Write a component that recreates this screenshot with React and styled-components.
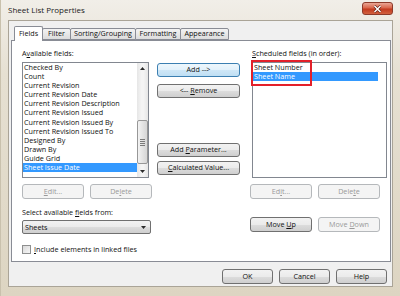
import React from 'react';
import styled, { createGlobalStyle } from 'styled-components';

const GlobalStyle = createGlobalStyle`
  html, body {
    margin: 0;
    padding: 0;
    background: #fff;
  }
  body {
    font-family: "Open Sans", "Liberation Sans", sans-serif;
    font-size: 7.2px;
    color: #111;
  }
`;

const Window = styled.div`
  width: 400px;
  height: 296px;
  box-sizing: border-box;
  padding: 0 7px 9px 7px;
  display: flex;
  flex-direction: column;
  background: linear-gradient(#f1eee8, #e6e0d2 25%, #ddd5c2);
  border-left: 1px solid #c9c1ad;
`;

const TitleBar = styled.div`
  height: 20px;
  display: flex;
  justify-content: space-between;
  align-items: flex-start;
`;

const Title = styled.div`
  font-size: 8px;
  line-height: 20px;
  color: #1a1a1a;
`;

const CloseBtn = styled.div`
  margin-top: 2px;
  width: 31px;
  height: 13px;
  box-sizing: border-box;
  border: 1px solid #8d3a2a;
  border-radius: 3px;
  background: linear-gradient(#eaa695, #d9654a 45%, #c23a1f 55%, #d2613f);
  display: flex;
  align-items: center;
  justify-content: center;
`;

const Client = styled.div`
  flex: 1;
  background: #f0f0f0;
  border: 1px solid #aaa497;
  padding: 5px 1px 0 2px;
  display: flex;
  flex-direction: column;
`;

const TabRow = styled.div`
  height: 14px;
  padding-left: 4px;
  display: flex;
  align-items: flex-end;
`;

const Tab = styled.div`
  width: ${p => p.w}px;
  height: ${p => (p.active ? 15 : 12)}px;
  box-sizing: border-box;
  margin-left: -1px;
  margin-bottom: ${p => (p.active ? -1 : 0)}px;
  border: 1px solid #898c95;
  border-bottom: ${p => (p.active ? 'none' : '1px solid #898c95')};
  border-radius: 2px 2px 0 0;
  background: ${p => (p.active ? '#fff' : 'linear-gradient(#f3f3f3, #e8e8e8 50%, #dcdcdc)')};
  position: relative;
  z-index: ${p => (p.active ? 2 : 1)};
  display: flex;
  align-items: center;
  justify-content: center;
  line-height: 1;
`;

const Panel = styled.div`
  height: 222px;
  box-sizing: border-box;
  background: #fff;
  border: 1px solid #898c95;
  padding: 8px 5px 0 10px;
  display: flex;
  align-items: flex-start;
`;

const Column = styled.div`
  width: ${p => p.w}px;
  height: ${p => (p.h ? `${p.h}px` : 'auto')};
  margin-left: ${p => p.gap || 0}px;
  margin-top: ${p => p.mt || 0}px;
  display: flex;
  flex-direction: column;
  position: relative;
`;

const Label = styled.div`
  line-height: 9px;
  height: 9px;
  margin-top: ${p => p.mt || 0}px;
  white-space: nowrap;
`;

const ListBox = styled.div`
  margin-top: 4px;
  width: ${p => p.w}px;
  height: 116px;
  box-sizing: border-box;
  border: 1px solid #828790;
  background: #fff;
  display: flex;
`;

const Items = styled.div`
  flex: 1;
  overflow: hidden;
`;

const Item = styled.div`
  height: 9.1px;
  line-height: 9.1px;
  padding-left: 1px;
  margin-right: ${p => p.mr || 0}px;
  white-space: nowrap;
  background: ${p => (p.selected ? '#3399ff' : 'transparent')};
  color: ${p => (p.selected ? '#fff' : '#111')};
`;

const ScrollBar = styled.div`
  width: 11px;
  display: flex;
  flex-direction: column;
  background: linear-gradient(90deg, #e6e6e6, #f4f4f4 40%, #f4f4f4 60%, #e6e6e6);
`;

const ScrollArrow = styled.div`
  height: 11px;
  display: flex;
  align-items: center;
  justify-content: center;
`;

const Track = styled.div`
  flex: 1;
  padding-top: 46px;
`;

const Thumb = styled.div`
  height: 44px;
  box-sizing: border-box;
  border: 1px solid #979797;
  border-radius: 2px;
  background: linear-gradient(90deg, #f3f3f3, #e4e4e4 50%, #d6d6d6);
  display: flex;
  flex-direction: column;
  align-items: center;
  justify-content: center;
  gap: 1px;
`;

const Grip = styled.div`
  width: 5px;
  height: 1px;
  background: #7a7a7a;
`;

const BtnRow = styled.div`
  display: flex;
  gap: ${p => p.gap || 6}px;
  margin-top: ${p => p.mt || 0}px;
  margin-left: ${p => p.ml || 0}px;
`;

const ButtonBox = styled.div`
  width: ${p => p.w}px;
  height: ${p => p.h || 15}px;
  margin-top: ${p => p.mt || 0}px;
  box-sizing: border-box;
  border: 1px solid ${p => (p.disabled ? '#b5b8bb' : p.primary ? '#3c7fb1' : '#707070')};
  border-radius: 3px;
  background: ${p =>
    p.disabled
      ? '#f4f4f4'
      : p.primary
      ? 'linear-gradient(#eef7fc, #e2f1fb 50%, #cfe7f7 50%, #bfdff4)'
      : 'linear-gradient(#f2f2f2, #ebebeb 50%, #dddddd 50%, #cfcfcf)'};
  color: ${p => (p.disabled ? '#9a9a9a' : '#111')};
  display: flex;
  align-items: center;
  justify-content: center;
  white-space: pre;
  line-height: 1;
`;

const Button = ({ children, ...rest }) => (
  <ButtonBox {...rest}>
    <span>{children}</span>
  </ButtonBox>
);

const Spacer = styled.div`
  flex: 1;
`;

const Select = styled.div`
  margin-top: 3px;
  width: 129px;
  height: 14px;
  box-sizing: border-box;
  border: 1px solid #707070;
  border-radius: 2px;
  background: linear-gradient(#f2f2f2, #ebebeb 50%, #dddddd 50%, #cfcfcf);
  display: flex;
  align-items: center;
  justify-content: space-between;
  padding: 0 4px 0 2px;
`;

const CheckRow = styled.div`
  margin-top: 10px;
  display: flex;
  align-items: center;
  gap: 3px;
  white-space: nowrap;
`;

const CheckBox = styled.div`
  width: 9px;
  height: 9px;
  box-sizing: border-box;
  border: 1px solid #8e8f8f;
  background: linear-gradient(135deg, #d9d9d9, #f6f6f6);
`;

const Highlight = styled.div`
  position: absolute;
  left: -1px;
  top: 11px;
  width: 61px;
  height: 26px;
  box-sizing: border-box;
  border: 2px solid #e3202a;
`;

const Footer = styled.div`
  display: flex;
  justify-content: flex-end;
  gap: 6px;
  padding: 7px 4px 0 0;
`;

const U = styled.span`
  text-decoration: underline;
`;

const Arrow = ({ up }) => (
  <svg width="5" height="3" viewBox="0 0 5 3">
    <polygon points={up ? '0,3 5,3 2.5,0' : '0,0 5,0 2.5,3'} fill="#2b2b2b" />
  </svg>
);

const available = [
  'Checked By',
  'Count',
  'Current Revision',
  'Current Revision Date',
  'Current Revision Description',
  'Current Revision Issued',
  'Current Revision Issued By',
  'Current Revision Issued To',
  'Designed By',
  'Drawn By',
  'Guide Grid',
  'Sheet Issue Date',
];

const tabs = [
  { name: 'Fields', w: 29, active: true },
  { name: 'Filter', w: 29 },
  { name: 'Sorting/Grouping', w: 66 },
  { name: 'Formatting', w: 46 },
  { name: 'Appearance', w: 49 },
];

export default function App() {
  return (
    <>
      <GlobalStyle />
      <Window>
        <TitleBar>
          <Title>Sheet List Properties</Title>
          <CloseBtn>
            <svg width="9" height="8" viewBox="0 0 9 8">
              <path d="M1.5 1 L7.5 7 M7.5 1 L1.5 7" stroke="#5a1a10" strokeWidth="2.6" />
              <path d="M1.5 1 L7.5 7 M7.5 1 L1.5 7" stroke="#fff" strokeWidth="1.5" />
            </svg>
          </CloseBtn>
        </TitleBar>
        <Client>
          <TabRow>
            {tabs.map(t => (
              <Tab key={t.name} w={t.w} active={t.active}>
                {t.name}
              </Tab>
            ))}
          </TabRow>
          <Panel>
            <Column w={130}>
              <Label>A<U>v</U>ailable fields:</Label>
              <ListBox w={127}>
                <Items>
                  {available.map((f, i) => (
                    <Item key={f} selected={i === available.length - 1}>{f}</Item>
                  ))}
                </Items>
                <ScrollBar>
                  <ScrollArrow><Arrow up /></ScrollArrow>
                  <Track>
                    <Thumb>
                      <Grip />
                      <Grip />
                      <Grip />
                      <Grip />
                    </Thumb>
                  </Track>
                  <ScrollArrow><Arrow /></ScrollArrow>
                </ScrollBar>
              </ListBox>
              <BtnRow mt={6}>
                <Button w={62} disabled><U>E</U>dit...</Button>
                <Button w={62} disabled>De<U>l</U>ete</Button>
              </BtnRow>
              <Label mt={9}>Select available <U>f</U>ields from:</Label>
              <Select>
                <span>Sheets</span>
                <Arrow />
              </Select>
              <CheckRow>
                <CheckBox />
                <span><U>I</U>nclude elements in linked files</span>
              </CheckRow>
            </Column>

            <Column w={83} gap={5} mt={14} h={112}>
              <Button w={83} h={14} primary>Add --&gt;</Button>
              <Button w={83} h={14} mt={7}>&lt;-- <U>R</U>emove</Button>
              <Spacer />
              <Button w={83} h={14}>Add <U>P</U>arameter...</Button>
              <Button w={83} h={14} mt={4}><U>C</U>alculated Value...</Button>
            </Column>

            <Column w={135} gap={12}>
              <Label><U>S</U>cheduled fields (in order):</Label>
              <ListBox w={135}>
                <Items>
                  <Item>Sheet Number</Item>
                  <Item selected mr={8}>Sheet Name</Item>
                </Items>
              </ListBox>
              <Highlight />
              <BtnRow mt={6} ml={-2}>
                <Button w={62} disabled>Ed<U>i</U>t...</Button>
                <Button w={62} disabled>Dele<U>t</U>e</Button>
              </BtnRow>
              <BtnRow mt={18} ml={-2}>
                <Button w={62}>Move <U>U</U>p</Button>
                <Button w={62} disabled>Move <U>D</U>own</Button>
              </BtnRow>
            </Column>
          </Panel>
          <Footer>
            <Button w={51}>OK</Button>
            <Button w={51}>Cancel</Button>
            <Button w={51}>Help</Button>
          </Footer>
        </Client>
      </Window>
    </>
  );
}
